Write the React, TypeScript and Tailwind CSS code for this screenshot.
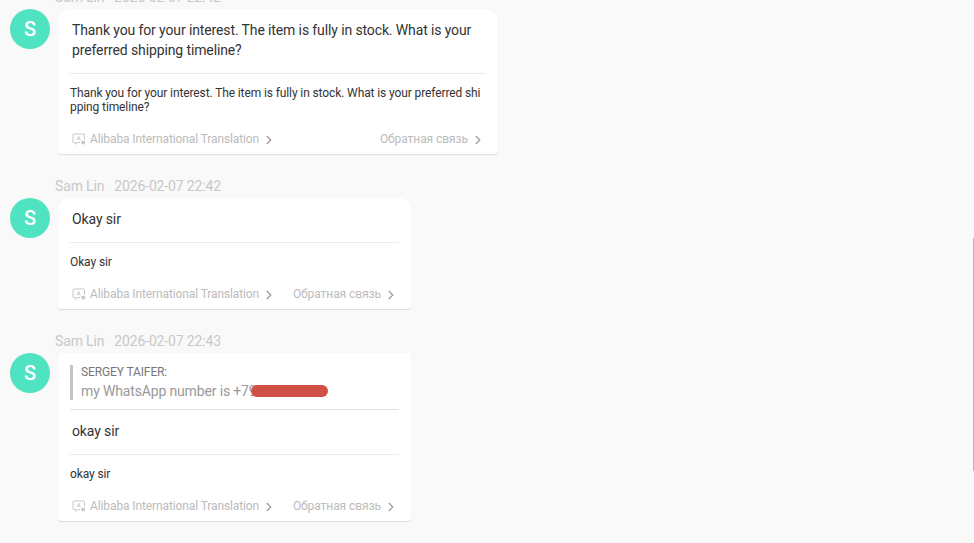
import clsx from "clsx";

interface Quote {
    author: string;
    text: string;
}

interface Message {
    id: number;
    date: string;
    text: string;
    translation: string;
    width: string;
    quote?: Quote;
}

const messages: Message[] = [
    {
        id: 1,
        date: "2026-02-07 22:42",
        text: "Thank you for your interest. The item is fully in stock. What is your preferred shipping timeline?",
        translation: "Thank you for your interest. The item is fully in stock. What is your preferred shipping timeline?",
        width: "w-[440px]",
    },
    {
        id: 2,
        date: "2026-02-07 22:42",
        text: "Okay sir",
        translation: "Okay sir",
        width: "w-[353px]",
    },
    {
        id: 3,
        date: "2026-02-07 22:43",
        text: "okay sir",
        translation: "okay sir",
        width: "w-[353px]",
        quote: { author: "SERGEY TAIFER:", text: "my WhatsApp number is +79" },
    },
];

function TranslateIcon() {
    return (
        <svg width="14" height="13" viewBox="0 0 14 13" fill="none" className="shrink-0">
            <path d="M8 9.5H5.5L3.7 11.3V9.5H1.5Q1 9.5 1 9V1.5Q1 1 1.5 1H12Q12.5 1 12.5 1.5V6.5" stroke="#c8c8c8" />
            <path d="M5 7.2L6.7 3.4L8.4 7.2M5.6 6.2H7.8" stroke="#c8c8c8" strokeWidth=".9" />
            <circle cx="11.2" cy="9.5" r="2.1" fill="#cacaca" />
        </svg>
    );
}

function Arrow() {
    return (
        <svg width="6" height="10" viewBox="0 0 6 10" fill="none" className="mt-0.5 shrink-0">
            <path d="M.8 1L4.8 5L.8 9" stroke="#999" strokeWidth="1.15" />
        </svg>
    );
}

function CardFooter() {
    return (
        <div className="mt-[17px] flex h-4 items-center pr-[5px] pl-0.5 text-[12px] leading-4 text-[#bbb]">
            <TranslateIcon />
            <span className="ml-1 tracking-[-0.11px]">Alibaba International Translation</span>
            <span className="ml-[7px]">
                <Arrow />
            </span>
            <span className="ml-auto tracking-[-0.07px]">Обратная связь</span>
            <span className="ml-[7px]">
                <Arrow />
            </span>
        </div>
    );
}

function QuoteBlock({ quote }: { quote: Quote }) {
    return (
        <div className="border-b border-[#e2e2e2] pt-3 pb-[9px]">
            <div className="h-[35px] border-l-3 border-[#c4c4c4] pl-2">
                <div className="h-4 text-[12px] leading-[14px] tracking-[-0.12px] text-[#777]">{quote.author}</div>
                <div className="relative h-5 w-max text-[14px] leading-5 tracking-[-0.15px] text-[#999]">
                    {quote.text}
                    <span className="absolute top-1 left-[170px] h-3 w-[77px] rounded-full bg-[#d05045]" />
                </div>
            </div>
        </div>
    );
}

function MessageItem({ message }: { message: Message }) {
    const { date, text, translation, width, quote } = message;

    return (
        <div>
            <div className="flex h-[22px] gap-2.5 pl-[55px] text-[14px] leading-5 tracking-[-0.15px] text-[#c8c8c8]">
                <span>Sam Lin</span>
                <span>{date}</span>
            </div>
            <div className="flex gap-2 pl-2.5">
                <div className="flex size-10 shrink-0 items-center justify-center rounded-full bg-[#50e3c2] text-[20px] font-medium text-white">
                    S
                </div>
                <div
                    className={clsx(
                        "bg-white px-3 pb-[7px] shadow-[0_1px_1px_rgba(0,0,0,0.12)]",
                        width,
                        quote ? "rounded-[3px]" : "rounded-t-[12px] rounded-b-[3px]"
                    )}
                >
                    {quote && <QuoteBlock quote={quote} />}
                    <div className="border-b border-[#ececec] px-0.5 pt-[11px] pb-[13px] text-[14px] leading-5 tracking-[-0.12px] text-[#333]">
                        {text}
                    </div>
                    <div className="pt-3 text-[12px] leading-[14px] tracking-[-0.11px] break-all text-[#333]">
                        {translation}
                    </div>
                    <CardFooter />
                </div>
            </div>
        </div>
    );
}

export default function App() {
    return (
        <div className="relative h-[543px] w-full overflow-hidden bg-[#f9f9f9] font-[Roboto,sans-serif]">
            <div className="-mt-[13px] flex flex-col gap-[22px]">
                {messages.map((message) => (
                    <MessageItem key={message.id} message={message} />
                ))}
            </div>
            <div className="absolute top-[238px] right-0 h-[233px] w-px bg-[#b8b8b8]" />
        </div>
    );
}
